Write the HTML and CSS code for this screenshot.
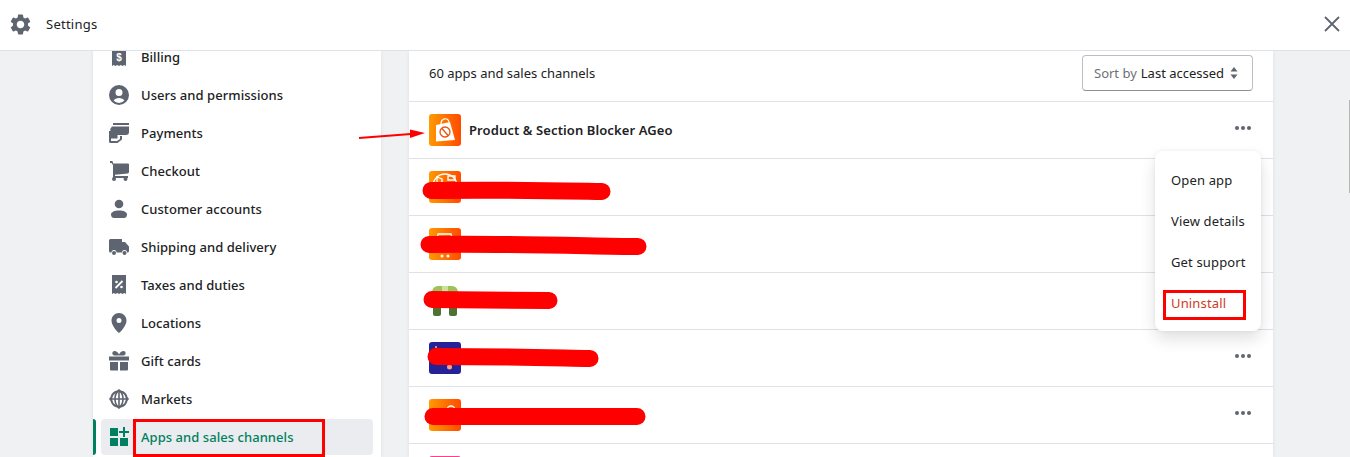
FILE: index.html
```html
<!DOCTYPE html>
<html lang="en">
<head>
  <meta charset="UTF-8">
  <title>Settings</title>
  <link rel="stylesheet" href="styles.css">
</head>
<body>
  <!-- Top bar -->
  <header class="topbar">
    <svg class="topbar-gear" viewBox="0 0 24 24"><path d="M19.14 12.94c.04-.3.06-.61.06-.94 0-.32-.02-.64-.07-.94l2.03-1.58a.49.49 0 0 0 .12-.61l-1.92-3.32a.488.488 0 0 0-.59-.22l-2.39.96c-.5-.38-1.03-.7-1.62-.94l-.36-2.54a.484.484 0 0 0-.48-.41h-3.84c-.24 0-.43.17-.47.41l-.36 2.54c-.59.24-1.13.57-1.62.94l-2.39-.96c-.22-.08-.47 0-.59.22L2.74 8.87c-.12.21-.08.47.12.61l2.03 1.58c-.05.3-.09.63-.09.94s.02.64.07.94l-2.03 1.58a.49.49 0 0 0-.12.61l1.92 3.32c.12.22.37.29.59.22l2.39-.96c.5.38 1.03.7 1.62.94l.36 2.54c.05.24.24.41.48.41h3.84c.24 0 .44-.17.47-.41l.36-2.54c.59-.24 1.13-.56 1.62-.94l2.39.96c.22.08.47 0 .59-.22l1.92-3.32c.12-.22.07-.47-.12-.61l-2.01-1.58zM12 15.6c-1.98 0-3.6-1.62-3.6-3.6s1.62-3.6 3.6-3.6 3.6 1.62 3.6 3.6-1.62 3.6-3.6 3.6z"/></svg>
    <span class="topbar-title">Settings</span>
    <svg class="topbar-close" viewBox="0 0 16 16"><path d="M1 1l14 14M15 1L1 15"/></svg>
  </header>

  <div class="layout">
    <!-- Sidebar -->
    <nav class="sidebar">
      <ul class="nav-list">
        <li class="nav-item">
          <svg class="nav-icon" viewBox="0 0 20 20"><path d="M3 0h14v19l-1.750-1-1.750 1-1.750-1-1.750 1-1.750-1-1.750 1-1.750-1L3 19z"/><text class="receipt-sign" x="10" y="14" text-anchor="middle">$</text></svg>
          <span>Billing</span>
        </li>
        <li class="nav-item">
          <svg class="nav-icon" viewBox="0 0 20 20"><path fill-rule="evenodd" d="M10 0a10 10 0 1 1 0 20 10 10 0 0 1 0-20zm0 4a3.500 3.500 0 1 0 0 7 3.500 3.500 0 0 0 0-7zm0 9c-2.400 0-4.400 1-5.400 2.600A7.600 7.600 0 0 0 10 18a7.600 7.600 0 0 0 5.400-2.400C14.400 14 12.400 13 10 13z"/></svg>
          <span>Users and permissions</span>
        </li>
        <li class="nav-item">
          <svg class="nav-icon" viewBox="0 0 20 20"><path d="M4 0h16v2H4zM3 3.500h17V9a3 3 0 0 1-3 3H8.500v3.500H1.500V8A4.500 4.500 0 0 1 3 3.500z"/><path d="M0 8h2v10h6l3-2v-3h2v3.500L8.500 20H1.500A1.500 1.500 0 0 1 0 18.500z"/></svg>
          <span>Payments</span>
        </li>
        <li class="nav-item">
          <svg class="nav-icon" viewBox="0 0 20 20"><path d="M1 0h2.500l.7 2.500H19a1 1 0 0 1 1 1V11a1.500 1.500 0 0 1-1.300 1.500L6 13.800V15h13v2H4.500a.5.5 0 0 1-.5-.5V4L2.500 2H1z"/><circle cx="5" cy="18" r="2"/><circle cx="16.500" cy="18" r="2"/></svg>
          <span>Checkout</span>
        </li>
        <li class="nav-item">
          <svg class="nav-icon" viewBox="0 0 20 20"><circle cx="10" cy="5" r="4.300"/><path d="M2 15.500c0-2.500 3.500-4 8-4s8 1.500 8 4c0 2.500-1.500 3.500-3 3.500H5c-1.500 0-3-1-3-3.500z"/></svg>
          <span>Customer accounts</span>
        </li>
        <li class="nav-item">
          <svg class="nav-icon" viewBox="0 0 20 20"><path d="M1.500 2H13v3h3l4 4.500V14a1.500 1.500 0 0 1-1.500 1.500H18a2.500 2.500 0 0 0-5 0H7.500a2.500 2.500 0 0 0-5 0H1.500A1.500 1.500 0 0 1 0 14V3.500A1.500 1.500 0 0 1 1.500 2z"/><circle cx="5" cy="16" r="2"/><circle cx="15.500" cy="16" r="2"/></svg>
          <span>Shipping and delivery</span>
        </li>
        <li class="nav-item">
          <svg class="nav-icon" viewBox="0 0 20 20"><path d="M3 0h14v19l-1.750-1-1.750 1-1.750-1-1.750 1-1.750-1-1.750 1-1.750-1L3 19z"/><circle class="receipt-mark" cx="7.500" cy="7" r="1.300"/><circle class="receipt-mark" cx="12.500" cy="12" r="1.300"/><path class="receipt-slash" d="M6.500 13l7-7"/></svg>
          <span>Taxes and duties</span>
        </li>
        <li class="nav-item">
          <svg class="nav-icon" viewBox="0 0 20 20"><path fill-rule="evenodd" d="M10 0c4.100 0 7.500 3.200 7.500 7.500C17.500 12 13 17.500 10 20 7 17.500 2.500 12 2.500 7.500 2.500 3.200 5.900 0 10 0zm0 5a2.500 2.500 0 1 0 0 5 2.500 2.500 0 0 0 0-5z"/></svg>
          <span>Locations</span>
        </li>
        <li class="nav-item">
          <svg class="nav-icon" viewBox="0 0 20 20"><path fill-rule="evenodd" d="M0 5.500h20V9.500H0zM1 11h8v8.500H2A1 1 0 0 1 1 18.500zM11 11h8v7.500a1 1 0 0 1-1 1h-7zM5.500 0C7.500 0 9 1.500 10 3.500 11 1.500 12.500 0 14.500 0 17 0 17.500 3.500 15 4.500H5C2.500 3.500 3 0 5.500 0z"/></svg>
          <span>Gift cards</span>
        </li>
        <li class="nav-item">
          <svg class="nav-icon" viewBox="0 0 20 20"><path fill-rule="evenodd" d="M10 0l2 1.500A8.500 8.500 0 0 1 18.500 8L20 10l-1.500 2a8.500 8.500 0 0 1-6.500 6.500L10 20l-2-1.500A8.500 8.500 0 0 1 1.500 12L0 10l1.500-2A8.500 8.500 0 0 1 8 1.500zM9.200 3.200C7.700 4.700 6.900 6.900 6.800 9.200h2.400zm1.600 0v6h2.400c-.1-2.300-.9-4.500-2.400-6zM3.200 9.200h2c.1-2 .6-3.800 1.500-5.200a6.900 6.900 0 0 0-3.500 5.200zm11.600 0h2A6.900 6.900 0 0 0 13.300 4c.9 1.400 1.400 3.200 1.500 5.200zm-11.600 1.600A6.900 6.900 0 0 0 6.700 16c-.9-1.400-1.400-3.200-1.500-5.200zm3.600 0c.1 2.300.9 4.500 2.400 6v-6zm4 0v6c1.500-1.500 2.300-3.700 2.400-6zm4 0c-.1 2-.6 3.800-1.500 5.200a6.900 6.900 0 0 0 3.500-5.200z"/></svg>
          <span>Markets</span>
        </li>
        <li class="nav-item nav-item-active">
          <svg class="nav-icon" viewBox="0 0 20 20"><path d="M1 1h8v8H1zM1 11h8v8H1zM11 11h8v8h-8zM14 0h2v4h4v2h-4v4h-2V6h-4V4h4z"/></svg>
          <span>Apps and sales channels</span>
        </li>
      </ul>
    </nav>

    <!-- App list -->
    <main class="card">
      <div class="card-head">
        <span>60 apps and sales channels</span>
        <div class="sort-select">
          <span class="sort-label">Sort by</span>
          <span>Last accessed</span>
          <svg class="sort-caret" viewBox="0 0 10 14"><path d="M5 1l3.500 4.500h-7zM5 13L1.500 8.500h7z"/></svg>
        </div>
      </div>
      <div class="app-row">
        <div class="app-icon app-icon-orange">
          <svg viewBox="0 0 32 32"><path class="bag" d="M7 11l14-3 5 18-19 1.500z"/><path class="bag-strap" d="M12 10c0-6 7-7 8-2"/><circle class="bag-ban" cx="16" cy="18" r="5"/><path class="bag-ban" d="M12.700 14.200l6.600 7.600"/></svg>
        </div>
        <span class="app-name">Product &amp; Section Blocker AGeo</span>
        <span class="app-more"><i></i><i></i><i></i></span>
      </div>
      <div class="app-row">
        <div class="app-icon app-icon-orange">
          <svg viewBox="0 0 32 32"><circle class="icon-line" cx="16" cy="15" r="12"/><path class="icon-line" d="M8 6l5 2v6H8zM19 5h7v4h-7z"/></svg>
        </div>
      </div>
      <div class="app-row">
        <div class="app-icon app-icon-orange">
          <svg viewBox="0 0 32 32"><path class="icon-line" d="M9 6h13l2 8H8z"/><circle class="bag" cx="13" cy="28" r="1.500"/><circle class="bag" cx="19" cy="28" r="1.500"/></svg>
        </div>
      </div>
      <div class="app-row">
        <div class="app-icon">
          <svg viewBox="0 0 32 32"><path class="droid-top" d="M3 14V7a6 6 0 0 1 6-6h14a6 6 0 0 1 6 6v7z"/><path class="droid-mid" d="M13 1h6v13h-6z"/><path class="droid-leg" d="M4 14h8v15a2 2 0 0 1-2 2H6a2 2 0 0 1-2-2zM20 14h8v15a2 2 0 0 1-2 2h-4a2 2 0 0 1-2-2z"/></svg>
        </div>
      </div>
      <div class="app-row">
        <div class="app-icon app-icon-navy">
          <svg viewBox="0 0 32 32"><path class="navy-mark" d="M6 4h2v3H6z"/><circle class="navy-dot" cx="20.500" cy="25" r="2.500"/></svg>
        </div>
        <span class="app-more"><i></i><i></i><i></i></span>
      </div>
      <div class="app-row">
        <div class="app-icon app-icon-orange">
          <svg viewBox="0 0 32 32"><circle class="icon-line" cx="22" cy="11" r="4"/><circle class="bag" cx="6" cy="11" r="2"/></svg>
        </div>
        <span class="app-more"><i></i><i></i><i></i></span>
      </div>
      <div class="app-row">
        <div class="app-icon app-icon-pink"></div>
      </div>

      <div class="menu">
        <div class="menu-item">Open app</div>
        <div class="menu-item">View details</div>
        <div class="menu-item">Get support</div>
        <div class="menu-item menu-item-danger">Uninstall</div>
      </div>
    </main>
  </div>

  <div class="scroll-thumb"></div>

  <!-- Red markup drawn on top of the screenshot -->
  <svg class="markup" width="1350" height="457" viewBox="0 0 1350 457">
    <path class="markup-line" d="M359 138l52-4"/>
    <path class="markup-head" d="M410 129.500L425 133l-15 5z"/>
    <path class="markup-blot" stroke-width="17" d="M431 190.500c60-1 110 0 171 1"/>
    <path class="markup-blot" stroke-width="17" d="M429 244.500c70-1 140 1 209 2"/>
    <path class="markup-blot" stroke-width="17" d="M432 299.500c40 0 80 1 117 1"/>
    <path class="markup-blot" stroke-width="17" d="M436 356.500c60 0 100 1 154 2"/>
    <path class="markup-blot" stroke-width="17" d="M433 416.500c70 0 140 0 204 0"/>
    <rect class="markup-box" x="134.500" y="420.500" width="189" height="35"/>
    <rect class="markup-box" x="1164.500" y="291.500" width="80" height="27"/>
  </svg>
</body>
</html>
```

FILE: styles.css
```css
* {
  box-sizing: border-box;
}

body {
  margin: 0;
  height: 100vh;
  overflow: hidden;
  display: flex;
  flex-direction: column;
  background: #f0f1f3;
  color: #202223;
  font-family: 'Noto Sans', sans-serif;
  font-size: 13px;
}

.topbar {
  flex: none;
  height: 51px;
  display: flex;
  align-items: center;
  padding: 0 10px 2px 8px;
  background: #fff;
  border-bottom: 1px solid #dfe1e6;
  position: relative;
  z-index: 2;
}

.topbar-gear {
  width: 25px;
  height: 25px;
  fill: #5f6570;
}

.topbar-title {
  margin-left: 13px;
  letter-spacing: 0.25px;
}

.topbar-close {
  width: 16px;
  height: 16px;
  margin-left: auto;
  fill: none;
  stroke: #5f6570;
  stroke-width: 1.8;
}

.layout {
  flex: 1;
  min-height: 0;
  display: flex;
  gap: 28px;
  padding-left: 93px;
}

.sidebar {
  width: 288px;
  background: #fff;
  box-shadow: 0 0 4px rgba(0, 0, 0, 0.08);
  overflow: hidden;
}

.nav-list {
  list-style: none;
  margin: -13px 0 0;
  padding: 0;
}

.nav-item {
  height: 38px;
  display: flex;
  align-items: center;
  gap: 12px;
  padding-left: 16px;
  font-weight: 500;
  line-height: 12px;
  letter-spacing: 0.05px;
  position: relative;
}

.nav-icon {
  width: 20px;
  height: 20px;
  fill: #5f6570;
}

.receipt-sign {
  fill: #fff;
  font-family: 'Liberation Sans', sans-serif;
  font-size: 10px;
  font-weight: 700;
}

.receipt-mark {
  fill: #fff;
}

.receipt-slash {
  stroke: #fff;
  stroke-width: 1.8;
}

.nav-item-active {
  height: 36px;
  margin: 1px 8px 0;
  padding-left: 8px;
  background: #ebecef;
  border-radius: 4px;
  color: #007f5f;
}

.nav-item-active::before {
  content: "";
  position: absolute;
  left: -8px;
  top: 0;
  bottom: 0;
  width: 3px;
  background: #008060;
  border-radius: 0 3px 3px 0;
}

.nav-item-active .nav-icon {
  fill: #008060;
}

.card {
  width: 864px;
  background: #fff;
  box-shadow: 0 0 4px rgba(0, 0, 0, 0.08);
  position: relative;
  overflow: hidden;
}

.card-head {
  height: 51px;
  display: flex;
  align-items: center;
  justify-content: space-between;
  padding: 0 20px 6px;
  border-bottom: 1px solid #dfe1e6;
}

.sort-select {
  width: 171px;
  height: 36px;
  display: flex;
  align-items: center;
  gap: 4px;
  padding-left: 11px;
  border: 1px solid #babfc3;
  border-bottom-color: #8c9196;
  border-radius: 4px;
  white-space: nowrap;
}

.sort-label {
  color: #6d7175;
}

.sort-caret {
  width: 10px;
  height: 14px;
  margin-left: 1px;
  fill: #5f6570;
}

.app-row {
  height: 57px;
  display: flex;
  align-items: center;
  gap: 8px;
  padding: 0 22px 0 20px;
  border-bottom: 1px solid #dfe1e6;
}

.app-name {
  font-weight: 600;
  letter-spacing: 0.1px;
}

.app-icon {
  width: 32px;
  height: 32px;
  border-radius: 3px;
  overflow: hidden;
}

.app-icon svg {
  display: block;
}

.app-icon-orange {
  background: linear-gradient(to right, #ff9a00, #ff4b00);
}

.app-icon-navy {
  background: #252298;
}

.app-icon-pink {
  background: #ff3d8b;
}

.bag {
  fill: #fff;
}

.bag-strap {
  fill: none;
  stroke: #fff;
  stroke-width: 1.2;
}

.bag-ban {
  fill: none;
  stroke: #e8550f;
  stroke-width: 1.3;
}

.icon-line {
  fill: none;
  stroke: #fff;
  stroke-width: 1.3;
}

.droid-top {
  fill: #9cc25c;
}

.droid-mid {
  fill: #c9e29a;
}

.droid-leg {
  fill: #4e7233;
}

.navy-mark {
  fill: #e9806a;
}

.navy-dot {
  fill: #ff9e80;
}

.app-more {
  margin-left: auto;
  margin-top: -4px;
  display: flex;
  gap: 2px;
}

.app-more i {
  width: 4px;
  height: 4px;
  border-radius: 50%;
  background: #5f6570;
}

/* Dropdown that opens under the first row's dots */
.menu {
  position: absolute;
  left: 746px;
  top: 100px;
  width: 106px;
  height: 180px;
  padding-top: 8px;
  background: #fff;
  border-radius: 8px;
  box-shadow: 0 8px 16px rgba(0, 0, 0, 0.12), 0 0 4px rgba(0, 0, 0, 0.06);
}

.menu-item {
  height: 41px;
  display: flex;
  align-items: center;
  padding-left: 16px;
  letter-spacing: 0.15px;
}

.menu-item-danger {
  color: #cf3a24;
}

.scroll-thumb {
  position: absolute;
  right: 0;
  top: 100px;
  width: 1px;
  height: 93px;
  background: #b5b5b5;
}

.markup {
  position: absolute;
  left: 0;
  top: 0;
  z-index: 3;
  pointer-events: none;
}

.markup-line {
  fill: none;
  stroke: #f00;
  stroke-width: 2;
}

.markup-head {
  fill: #f00;
}

.markup-blot {
  fill: none;
  stroke: #f00;
  stroke-linecap: round;
}

.markup-box {
  fill: none;
  stroke: #f00;
  stroke-width: 3;
}
```
